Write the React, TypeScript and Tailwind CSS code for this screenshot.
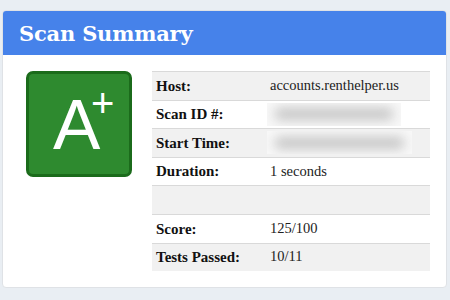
import React from 'react';

type Row = { label: string; value?: string; blur?: number };

const rows: Row[] = [
  { label: 'Host:', value: 'accounts.renthelper.us' },
  { label: 'Scan ID #:', blur: 134 },
  { label: 'Start Time:', blur: 145 },
  { label: 'Duration:', value: '1 seconds' },
  { label: '' },
  { label: 'Score:', value: '125/100' },
  { label: 'Tests Passed:', value: '10/11' },
];

const serif = { fontFamily: 'Georgia, "Liberation Serif", serif' };

export default function App() {
  return (
    <div className="w-[450px] h-[300px] bg-[#e9eef3] pt-[10px] pl-[2px] overflow-hidden">
      {/* Card */}
      <div className="w-[445px] h-[278px] bg-white rounded-[4px] border border-[#dfe2e6] overflow-hidden flex flex-col">
        <div className="h-[44px] bg-[#4682ea] flex items-center px-[16px]">
          <h2
            className="text-white text-[21px] font-bold leading-none tracking-[-0.2px]"
            style={{ fontFamily: '"DejaVu Serif", serif' }}
          >
            Scan Summary
          </h2>
        </div>

        <div className="flex pt-[16px]">
          {/* Grade badge */}
          <div
            className="relative ml-[23px] w-[106px] h-[106px] rounded-[7px] border-[3px] border-[#1b6b1b] bg-[#2e8a2f] text-white leading-none"
            style={{ fontFamily: '"Liberation Sans", Arial, sans-serif' }}
          >
            <span className="absolute left-[24px] top-[15px] text-[71px]">A</span>
            <span className="absolute left-[62px] top-[9px] text-[40px]">+</span>
          </div>

          {/* Details table */}
          <div className="ml-[20px] w-[278px] flex flex-col text-[#222]" style={serif}>
            {rows.map((r, i) => (
              <div
                key={i}
                className={`h-[28.6px] flex items-center border-t border-[#d9d9d9] ${
                  i % 2 === 0 ? 'bg-[#f1f1f1]' : 'bg-white'
                }`}
              >
                <div className="w-[118px] pl-[4px] font-bold text-[15px] text-[#111]">{r.label}</div>
                {r.value && <div className="text-[14.5px]">{r.value}</div>}
                {r.blur && (
                  <div
                    className="h-[23px] -ml-[3px] bg-[#f8f8f8] flex items-center overflow-hidden"
                    style={{ width: r.blur }}
                  >
                    <div className="mx-[8px] h-[12px] flex-1 rounded bg-[#c4c4c4] blur-[6px]" />
                  </div>
                )}
              </div>
            ))}
          </div>
        </div>
      </div>
    </div>
  );
}
